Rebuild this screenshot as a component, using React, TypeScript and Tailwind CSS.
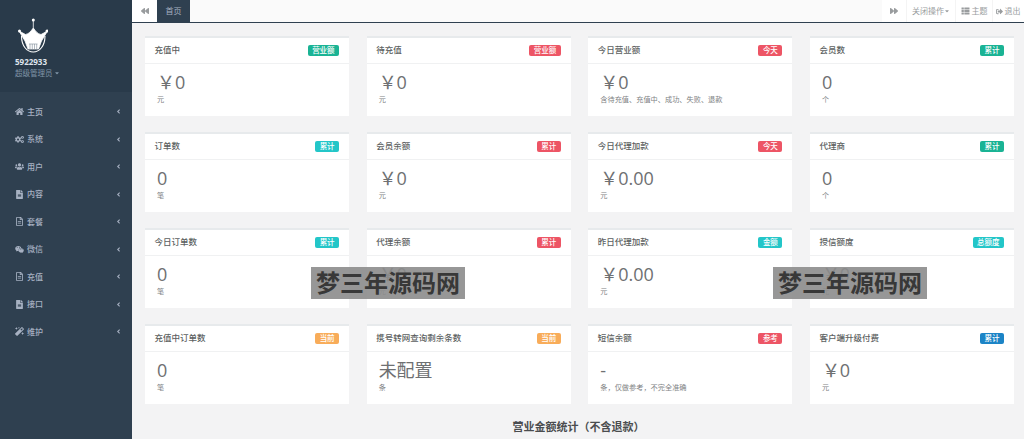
import { FaHome, FaCogs, FaUsers, FaFileAlt, FaRegFileAlt, FaWeixin, FaMagic, FaBackward, FaForward, FaAngleLeft, FaCaretDown, FaThList, FaSignOutAlt } from "react-icons/fa";
import type { ComponentType } from "react";

const font = "font-['Open_Sans','Noto_Sans_CJK_SC',sans-serif]";

const navItems: { label: string; Icon: ComponentType<{ className?: string }> }[] = [
  { label: "主页", Icon: FaHome },
  { label: "系统", Icon: FaCogs },
  { label: "用户", Icon: FaUsers },
  { label: "内容", Icon: FaFileAlt },
  { label: "套餐", Icon: FaRegFileAlt },
  { label: "微信", Icon: FaWeixin },
  { label: "充值", Icon: FaRegFileAlt },
  { label: "接口", Icon: FaFileAlt },
  { label: "维护", Icon: FaMagic },
];

const green = "bg-[#1ab394]";
const red = "bg-[#ed5565]";
const cyan = "bg-[#23c6c8]";
const orange = "bg-[#f8ac59]";
const blue = "bg-[#1c84c6]";

const cards = [
  { title: "充值中", badge: "营业额", color: green, value: "￥0", unit: "元" },
  { title: "待充值", badge: "营业额", color: red, value: "￥0", unit: "元" },
  { title: "今日营业额", badge: "今天", color: red, value: "￥0", unit: "含待充值、充值中、成功、失败、退款" },
  { title: "会员数", badge: "累计", color: green, value: "0", unit: "个" },
  { title: "订单数", badge: "累计", color: cyan, value: "0", unit: "笔" },
  { title: "会员余额", badge: "累计", color: red, value: "￥0", unit: "元" },
  { title: "今日代理加款", badge: "今天", color: red, value: "￥0.00", unit: "元" },
  { title: "代理商", badge: "累计", color: green, value: "0", unit: "个" },
  { title: "今日订单数", badge: "累计", color: cyan, value: "0", unit: "笔" },
  { title: "代理余额", badge: "累计", color: red, value: "￥0", unit: "元" },
  { title: "昨日代理加款", badge: "金额", color: cyan, value: "￥0.00", unit: "元" },
  { title: "授信额度", badge: "总额度", color: cyan, value: "￥0", unit: "元" },
  { title: "充值中订单数", badge: "当前", color: orange, value: "0", unit: "笔" },
  { title: "携号转网查询剩余条数", badge: "当前", color: orange, value: "未配置", unit: "条" },
  { title: "短信余额", badge: "参考", color: red, value: "-", unit: "条，仅做参考，不完全准确" },
  { title: "客户端升级付费", badge: "累计", color: blue, value: "￥0", unit: "元" },
];

function Crown() {
  return (
    <svg viewBox="0 0 30 35" className="w-[30px] h-[35px]" fill="none">
      <path d="M15.3 1 L15.3 10 C13 13 11 16 7.5 16.5 L1 13 L7 23 L10 31 L20.5 31 L23.5 23 L29.5 13 L23 16.5 C19.5 16 17.5 13 15.3 10" fill="#fff" stroke="#fff" strokeWidth="0.8" strokeLinejoin="round" />
      <circle cx="15.3" cy="2" r="1.5" fill="#fff" />
      <circle cx="1.5" cy="13" r="1.5" fill="#fff" />
      <circle cx="29" cy="13" r="1.5" fill="#fff" />
      <path d="M11 26 H19.5 M12 26 V31 M14.3 26 V31 M16.5 26 V31 M18.7 26 V31" stroke="#7e8b98" strokeWidth="0.6" />
      <path d="M3.5 18 C3.5 28 9 34 15.2 34 C21.5 34 27 28 27 18" stroke="#fff" strokeWidth="1.1" />
    </svg>
  );
}

function Sidebar() {
  return (
    <aside className="w-[132px] shrink-0 bg-[#2f4050] flex flex-col">
      <div className="h-[92px] bg-[#293a4a] pl-[15px] pt-[18px]">
        <div className="pl-[3px]">
          <Crown />
        </div>
        <div className="mt-[3px] text-[8px] leading-[11px] font-bold text-[#dfe4ed]">5922933</div>
        <div className="flex items-center gap-[1px] text-[7.5px] leading-[10px] mt-[1px] text-[#8095a8]">
          超级管理员
          <FaCaretDown className="w-[6px] h-[6px]" />
        </div>
      </div>
      <nav className="pt-[6px]">
        {navItems.map(({ label, Icon }) => (
          <div key={label} className="h-[27.5px] pl-[15px] pr-[10px] flex items-center text-[#a7b1c2] text-[8px] font-medium">
            <Icon className="w-[9px] h-[9px] mr-[3px]" />
            <span className="flex-1">{label}</span>
            <FaAngleLeft className="w-[7px] h-[7px]" />
          </div>
        ))}
      </nav>
    </aside>
  );
}

function TopBar() {
  return (
    <header className="h-[23px] shrink-0 flex items-stretch bg-[#fafafa] border-b border-[#2f4050] text-[#999c9e] text-[8px]">
      <div className="w-[25px] bg-white flex items-center justify-center">
        <FaBackward className="w-[8px] h-[8px]" />
      </div>
      <div className="w-[33px] bg-[#2f4050] text-[#a7b1c2] flex items-center justify-center">首页</div>
      <div className="flex-1" />
      <div className="w-[24px] bg-white flex items-center justify-center">
        <FaForward className="w-[8px] h-[8px]" />
      </div>
      <div className="w-[49px] bg-white flex items-center justify-center border-l border-[#f4f4f4]">
        关闭操作
        <FaCaretDown className="w-[6px] h-[6px]" />
      </div>
      <div className="w-[37px] bg-white flex items-center justify-center gap-[2px] border-l border-[#f4f4f4]">
        <FaThList className="w-[9px] h-[8px]" />
        主题
      </div>
      <div className="w-[32px] bg-white flex items-center justify-center gap-[2px] border-l border-[#f4f4f4] pr-[1px]">
        <FaSignOutAlt className="w-[7px] h-[7px]" />
        退出
      </div>
    </header>
  );
}

function Card({ title, badge, color, value, unit }: (typeof cards)[number]) {
  return (
    <section className="h-[80px] bg-white border-t-2 border-[#e7eaec] text-[#676a6c]">
      <div className="h-[26px] flex items-center justify-between pl-[9.5px] pr-[10px] border-b border-[#f0f1f2]">
        <h5 className="text-[8.5px] font-medium text-[#5c5f61]">{title}</h5>
        <span className={`${color} h-[11px] px-[4.5px] rounded-[2px] text-white text-[7.5px] font-medium leading-[11px]`}>{badge}</span>
      </div>
      <div className="pl-[12px] pt-[7px]">
        <div className="text-[18px] leading-[22px] font-normal text-[#6e7072]">{value}</div>
        <div className="text-[7.2px] leading-[10px] mt-[1px] text-[#808284]">{unit}</div>
      </div>
    </section>
  );
}

function Watermark({ className }: { className: string }) {
  return (
    <div className={`absolute top-[267px] w-[154px] h-[32px] bg-[#8c8c8c]/90 text-[#383838] text-[24px] leading-[31px] font-bold text-center ${className}`}>
      梦三年源码网
    </div>
  );
}

export default function App() {
  return (
    <div className={`relative w-[1024px] h-[439px] overflow-hidden flex bg-[#f3f3f4] ${font}`}>
      <Sidebar />
      <main className="flex-1 flex flex-col">
        <TopBar />
        <div className="grid grid-cols-4 gap-x-[17.5px] gap-y-[16px] pl-[13px] pr-[10px] pt-[13px]">
          {cards.map((c) => (
            <Card key={c.title} {...c} />
          ))}
        </div>
        <h3 className="mt-[15px] ml-[1px] text-center text-[11px] font-bold text-[#4a4c4e]">营业金额统计（不含退款）</h3>
      </main>
      <Watermark className="left-[311px]" />
      <Watermark className="left-[773px]" />
    </div>
  );
}
